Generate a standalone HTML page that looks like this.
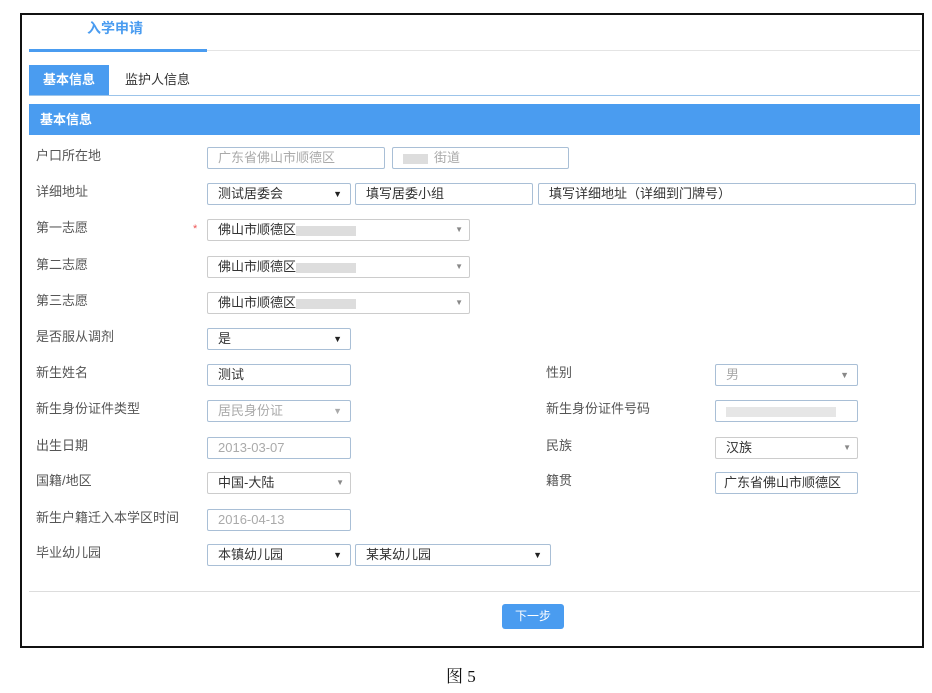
<!DOCTYPE html>
<html><head><meta charset="utf-8"><style>
body{margin:0;width:932px;height:693px;background:#fff;position:relative;font-family:"Liberation Sans","Noto Sans CJK SC",sans-serif;font-size:13px;color:#333;overflow:hidden}
.a{position:absolute}
.frame{left:20px;top:13px;width:900px;height:631px;border:2px solid #111}
.l{position:absolute;left:36px;font-size:13px;color:#555;line-height:16px;margin-top:-2px}
.r{position:absolute;left:546px;font-size:13px;color:#555;line-height:16px;margin-top:-2px}
.b{position:absolute;box-sizing:border-box;border:1px solid #a9bfd6;border-radius:2px;height:22px;line-height:20px;padding-left:10px;font-size:13px;color:#333;background:#fff}
.g{color:#aaa}
.s{border-color:#ccc}
.ar{position:absolute;right:8px;top:0;font-size:9px;color:#222}
.ar2{position:absolute;right:6px;top:0;font-size:8px;color:#888}
.blur{display:inline-block;width:60px;height:10px;background:#ddd;vertical-align:middle}
</style></head><body>
<div class="a frame"></div>
<div class="a" style="left:87px;top:18px;color:#4a9cf0;font-weight:bold;font-size:14px">入学申请</div>
<div class="a" style="left:29px;top:50px;width:891px;height:1px;background:#e4e4e4"></div>
<div class="a" style="left:29px;top:49px;width:178px;height:3px;background:#4a9cf0"></div>
<div class="a" style="left:29px;top:65px;width:80px;height:30px;background:#4a9cf0;color:#fff;font-weight:bold;line-height:30px;text-align:center;font-size:13px">基本信息</div>
<div class="a" style="left:125px;top:65px;line-height:30px;color:#333">监护人信息</div>
<div class="a" style="left:29px;top:95px;width:891px;height:1px;background:#9cc4ea"></div>
<div class="a" style="left:29px;top:104px;width:891px;height:31px;background:#4a9cf0;color:#fff;font-weight:bold;line-height:31px;padding-left:11px;box-sizing:border-box">基本信息</div>

<div class="l" style="top:150px">户口所在地</div>
<div class="b g" style="left:207px;top:147px;width:178px">广东省佛山市顺德区</div>
<div class="b g" style="left:392px;top:147px;width:177px"><span class="blur" style="width:25px;margin-right:6px"></span>街道</div>

<div class="l" style="top:186px">详细地址</div>
<div class="b" style="left:207px;top:183px;width:144px">测试居委会<span class="ar">▼</span></div>
<div class="b" style="left:355px;top:183px;width:178px">填写居委小组</div>
<div class="b" style="left:538px;top:183px;width:378px">填写详细地址（详细到门牌号）</div>

<div class="l" style="top:222px">第一志愿</div>
<div class="a" style="left:193px;top:223px;color:#e55;font-size:11px">*</div>
<div class="b s" style="left:207px;top:219px;width:263px">佛山市顺德区<span class="blur"></span><span class="ar2">▼</span></div>
<div class="l" style="top:259px">第二志愿</div>
<div class="b s" style="left:207px;top:256px;width:263px">佛山市顺德区<span class="blur"></span><span class="ar2">▼</span></div>
<div class="l" style="top:295px">第三志愿</div>
<div class="b s" style="left:207px;top:292px;width:263px">佛山市顺德区<span class="blur"></span><span class="ar2">▼</span></div>

<div class="l" style="top:331px">是否服从调剂</div>
<div class="b" style="left:207px;top:328px;width:144px">是<span class="ar">▼</span></div>

<div class="l" style="top:367px">新生姓名</div>
<div class="b" style="left:207px;top:364px;width:144px">测试</div>
<div class="r" style="top:367px">性别</div>
<div class="b g" style="left:715px;top:364px;width:143px">男<span class="ar" style="color:#888">▼</span></div>

<div class="l" style="top:403px">新生身份证件类型</div>
<div class="b g" style="left:207px;top:400px;width:144px">居民身份证<span class="ar" style="color:#aaa">▼</span></div>
<div class="r" style="top:403px">新生身份证件号码</div>
<div class="b" style="left:715px;top:400px;width:143px"><span class="blur" style="width:110px;background:#e6e6e6"></span></div>

<div class="l" style="top:440px">出生日期</div>
<div class="b g" style="left:207px;top:437px;width:144px">2013-03-07</div>
<div class="r" style="top:440px">民族</div>
<div class="b s" style="left:715px;top:437px;width:143px">汉族<span class="ar2">▼</span></div>

<div class="l" style="top:475px">国籍/地区</div>
<div class="b s" style="left:207px;top:472px;width:144px">中国-大陆<span class="ar2">▼</span></div>
<div class="r" style="top:475px">籍贯</div>
<div class="b" style="left:715px;top:472px;width:143px;padding-left:8px">广东省佛山市顺德区</div>

<div class="l" style="top:512px">新生户籍迁入本学区时间</div>
<div class="b g" style="left:207px;top:509px;width:144px">2016-04-13</div>

<div class="l" style="top:547px">毕业幼儿园</div>
<div class="b" style="left:207px;top:544px;width:144px">本镇幼儿园<span class="ar">▼</span></div>
<div class="b" style="left:355px;top:544px;width:196px">某某幼儿园<span class="ar">▼</span></div>

<div class="a" style="left:29px;top:591px;width:891px;height:1px;background:#ddd"></div>
<div class="a" style="left:502px;top:604px;width:62px;height:25px;background:#4a9cf0;border-radius:3px;color:#fff;line-height:25px;text-align:center;font-size:12px">下一步</div>

<div class="a" style="left:446px;top:662px;font-family:'Liberation Serif','Noto Serif CJK SC',serif;font-size:17px;color:#111">图 5</div>
</body></html>
